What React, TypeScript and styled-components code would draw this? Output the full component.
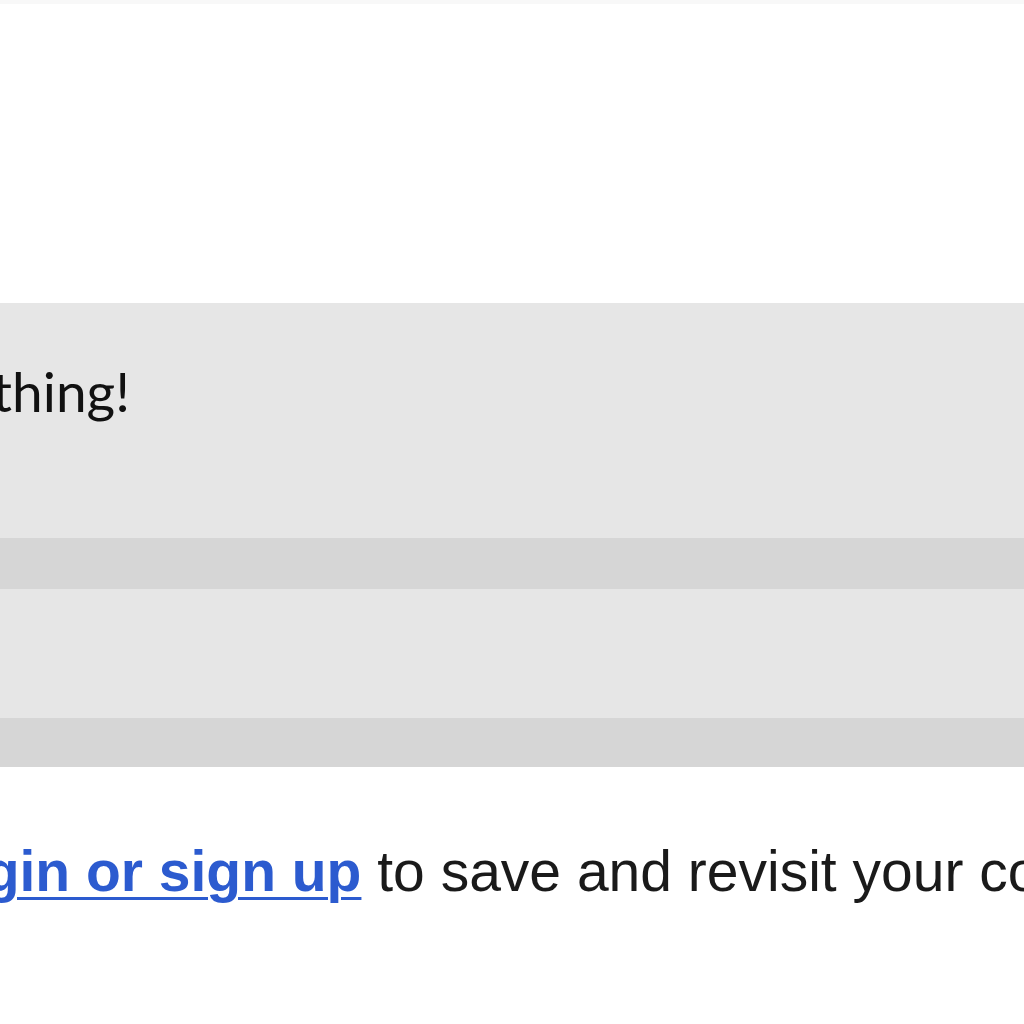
import React from "react";
import styled, { createGlobalStyle } from "styled-components";

const Global = createGlobalStyle`
  html, body { margin: 0; padding: 0; background: #ffffff; }
  body { overflow: hidden; }
`;

const Page = styled.div`
  width: 1024px;
  height: 1024px;
  overflow: hidden;
  background: #ffffff;
  display: flex;
  flex-direction: column;
`;

const TopStrip = styled.div`
  height: 4px;
  background: #f8f8f8;
  flex-shrink: 0;
`;

const Spacer = styled.div<{ $h: number }>`
  height: ${(p) => p.$h}px;
  flex-shrink: 0;
`;

const Band = styled.div<{ $h: number; $tone: "light" | "dark" }>`
  height: ${(p) => p.$h}px;
  flex-shrink: 0;
  background: ${(p) => (p.$tone === "light" ? "#e6e6e6" : "#d6d6d6")};
  display: flex;
  align-items: flex-start;
  overflow: hidden;
`;

const Message = styled.p`
  margin: 53px 0 0 -234px;
  font-family: Lato, "Open Sans", sans-serif;
  font-size: 55px;
  line-height: 70px;
  color: #111111;
  white-space: nowrap;
`;

const Footer = styled.p`
  margin: 72px 0 0 -85px;
  font-family: "Liberation Sans", Arial, sans-serif;
  font-size: 57px;
  line-height: 64px;
  color: #1a1a1a;
  white-space: nowrap;
`;

const AuthLink = styled.a`
  color: #2c5bcf;
  font-weight: 700;
  text-decoration: underline;
  text-decoration-thickness: 3px;
  text-underline-offset: 6px;
`;

export default function App() {
  return (
    <>
      <Global />
      <Page>
        <TopStrip />
        <Spacer $h={299} />
        <Band $h={235} $tone="light">
          <Message>Say something!</Message>
        </Band>
        <Band $h={51} $tone="dark" />
        <Band $h={129} $tone="light" />
        <Band $h={49} $tone="dark" />
        <Footer>
          <AuthLink href="#">Login or sign up</AuthLink> to save and revisit your conversations
        </Footer>
      </Page>
    </>
  );
}
